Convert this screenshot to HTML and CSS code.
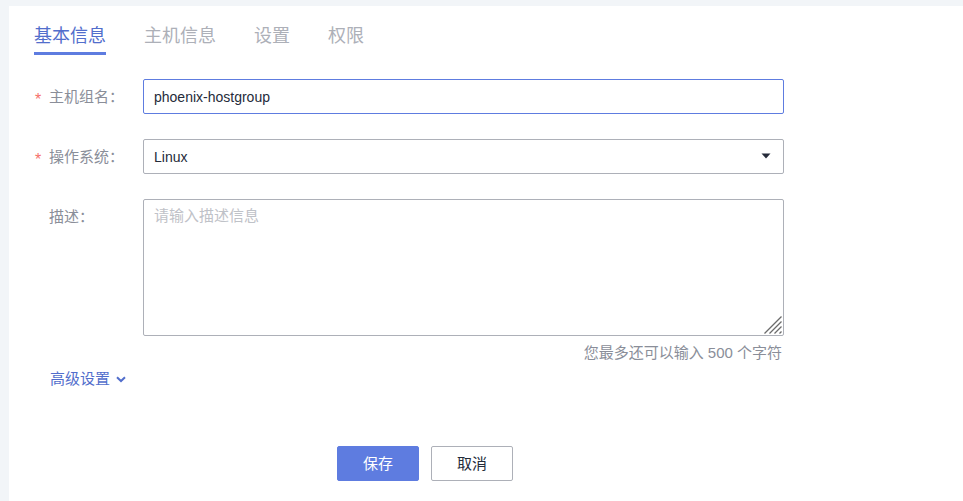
FILE: index.html
```html
<!DOCTYPE html>
<html lang="zh-CN">
<head>
<meta charset="utf-8">
<title>主机组</title>
<link rel="stylesheet" href="styles.css">
</head>
<body>
<main class="panel">
  <nav class="tabs">
    <a class="tab tab-active" href="#basic" aria-current="page">基本信息</a>
    <a class="tab" href="#hosts">主机信息</a>
    <a class="tab" href="#settings">设置</a>
    <a class="tab" href="#permissions">权限</a>
  </nav>
  <form class="form">
    <div class="row">
      <label class="label" for="name"><span class="star">*</span>主机组名：</label>
      <input class="control control-focus" id="name" type="text" value="phoenix-hostgroup">
    </div>
    <div class="row">
      <label class="label" for="os"><span class="star">*</span>操作系统：</label>
      <div class="field">
        <select class="control" id="os"><option>Linux</option></select>
        <svg class="caret" viewBox="0 0 10 6" aria-hidden="true"><path d="M0.5 0.5h9L5 5.5z"/></svg>
      </div>
    </div>
    <div class="row">
      <label class="label" for="desc"><span class="star"></span>描述：</label>
      <div class="field">
        <textarea class="control area" id="desc" placeholder="请输入描述信息"></textarea>
        <svg class="grip" viewBox="0 0 18 18" aria-hidden="true"><path d="M0.5 17.5L17.5 0.5M5.5 17.5L17.5 5.5M10.5 17.5L17.5 10.5M15.5 17.5L17.5 15.5"/></svg>
      </div>
    </div>
    <p class="hint">您最多还可以输入 500 个字符</p>
    <button class="advanced" type="button">高级设置
      <svg class="chevron" viewBox="0 0 10 7" aria-hidden="true"><path d="M1 1.2L5 5L9 1.2"/></svg>
    </button>
    <div class="actions">
      <button class="button primary" type="submit">保存</button>
      <button class="button" type="button">取消</button>
    </div>
  </form>
</main>
</body>
</html>
```
FILE: styles.css
```css
* {
  box-sizing: border-box;
}

body {
  margin: 0;
  padding: 6px 0 0 9px;
  background: #f2f5f8;
  color: #252b3a;
  font: 15px/20px "Liberation Sans", "Noto Sans CJK SC", sans-serif;
}

.panel {
  min-height: calc(100vh - 6px);
  padding: 17px 25px 20px;
  background: #fff;
}

.tabs {
  display: flex;
  gap: 38px;
}

.tab {
  padding-bottom: 2px;
  border-bottom: 3px solid transparent;
  color: #adb0b8;
  font-size: 18px;
  line-height: 27px;
  text-decoration: none;
}

.tab-active {
  border-color: #5e7ce0;
  color: #526ecc;
}

.form {
  display: flex;
  flex-direction: column;
  max-width: 750px;
  margin-top: 24px;
}

.row {
  display: grid;
  grid-template-columns: 109px 1fr;
  margin-bottom: 25px;
}

.label {
  display: flex;
  height: 35px;
  align-items: center;
  color: #8a8e99;
}

.star {
  width: 15px;
  padding: 6px 0 0 1px;
  color: #f66f6a;
  font-size: 16px;
}

.field {
  position: relative;
  display: flex;
}

.control {
  width: 100%;
  height: 35px;
  margin: 0;
  padding: 0 10px;
  border: 1px solid #adb0b8;
  border-radius: 2px;
  outline: 0;
  appearance: none;
  background: #fff;
  color: #252b3a;
  font: inherit;
  font-size: 14px;
}

.control-focus {
  border-color: #5e7ce0;
}

.area {
  height: 137px;
  padding-top: 6px;
  resize: none;
  font-size: 15px;
}

.area::placeholder {
  color: #bfc2c8;
}

.caret {
  position: absolute;
  top: 14px;
  right: 13px;
  width: 10px;
  height: 6px;
  fill: #252b3a;
  pointer-events: none;
}

.grip {
  position: absolute;
  right: 2px;
  bottom: 2px;
  width: 18px;
  height: 18px;
  stroke: #6b6b6b;
  stroke-width: 1.3;
  pointer-events: none;
}

.hint {
  margin: -18px 2px 6px 0;
  color: #8a8e99;
  text-align: right;
}

.advanced {
  display: flex;
  align-items: center;
  align-self: flex-start;
  gap: 6px;
  margin-left: 16px;
  padding: 0;
  border: 0;
  background: none;
  color: #526ecc;
  font: inherit;
}

.chevron {
  width: 10px;
  height: 7px;
  fill: none;
  stroke: #526ecc;
  stroke-width: 2;
}

.actions {
  display: flex;
  gap: 12px;
  margin: 57px 0 0 303px;
}

.button {
  width: 82px;
  height: 35px;
  padding: 0;
  border: 1px solid #adb0b8;
  border-radius: 2px;
  background: #fff;
  color: #252b3a;
  font: inherit;
}

.primary {
  border-color: #5e7ce0;
  background: #5e7ce0;
  color: #fff;
}
```
